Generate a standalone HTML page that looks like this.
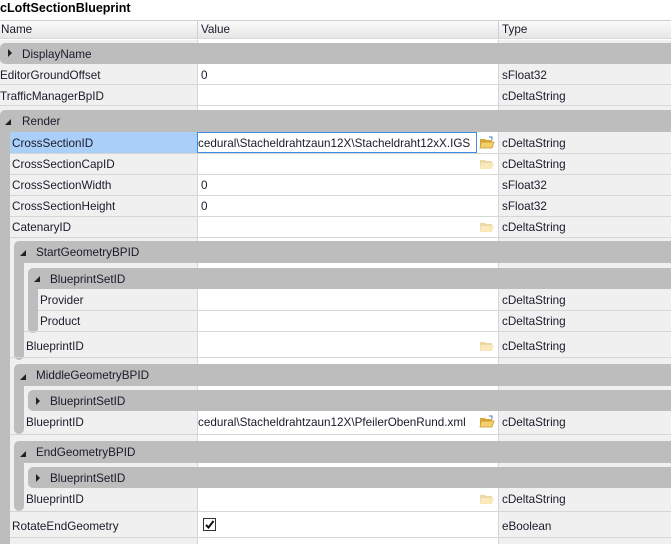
<!DOCTYPE html>
<html><head><meta charset="utf-8"><style>
body{margin:0;width:671px;height:544px;overflow:hidden;position:relative;background:#fff;font-family:"Liberation Sans",sans-serif;font-size:11.7px;color:#1a1a2a}
div{position:absolute;box-sizing:border-box}
.t{white-space:nowrap;line-height:21px;padding-top:1px}
.col{top:40px;height:504px}
.g{background:#bdbdbd;height:21px;right:0;border-top-left-radius:5px;border-bottom-left-radius:5px}
.bar{background:#bdbdbd;border-radius:0 0 5px 5px}
.ln{height:1px;background:#d6d6d6;right:0}
.tri{width:0;height:0}
.ex{border-top:4px solid transparent;border-bottom:4px solid transparent;border-left:4px solid #222}
.co{border-left:6px solid transparent;border-bottom:6px solid #222}
</style></head><body>
<div class="t" style="left:0;top:-3px;font-weight:bold;font-size:12.5px;color:#000">cLoftSectionBlueprint</div>
<div style="left:0;top:20px;width:671px;height:19px;background:linear-gradient(#fbfbfb,#e6e6e6);border-top:1px solid #d0d0d0;border-bottom:1px solid #d8d8d8"></div>
<div style="left:197px;top:20px;width:1px;height:19px;background:#d0d0d0"></div>
<div style="left:498px;top:20px;width:1px;height:19px;background:#d0d0d0"></div>
<div class="t" style="left:1px;top:19px;line-height:20px">Name</div>
<div class="t" style="left:201px;top:19px;line-height:20px">Value</div>
<div class="t" style="left:502px;top:19px;line-height:20px">Type</div>
<div class="col" style="left:0;width:197px;background:#f0f0f0"></div>
<div class="col" style="left:197px;width:1px;background:#d6d6d6"></div>
<div class="col" style="left:498px;width:173px;background:#f0f0f0;border-left:1px solid #d6d6d6"></div>

<div class="g" style="left:0;top:43px"></div>
<div class="tri ex" style="left:8px;top:49px"></div>
<div class="t" style="left:22px;top:43px">DisplayName</div>
<div class="ln" style="left:0;top:84px"></div>
<div class="t" style="left:0;top:64px">EditorGroundOffset</div><div class="t" style="left:201px;top:64px">0</div><div class="t" style="left:502px;top:64px">sFloat32</div>
<div class="ln" style="left:0;top:105px"></div>
<div class="t" style="left:0;top:85px">TrafficManagerBpID</div><div class="t" style="left:502px;top:85px">cDeltaString</div>

<div class="g" style="left:0;top:110px;height:22px;border-bottom-left-radius:0"></div>
<div class="bar" style="left:0;top:131px;width:10px;height:413px;border-radius:0"></div>
<div class="tri co" style="left:5px;top:119px"></div>
<div class="t" style="left:22px;top:110px">Render</div>

<div style="left:10px;top:132px;width:187px;height:21px;background:#aacff8"></div>
<div style="left:197px;top:132px;width:280px;height:21px;border:1px solid #3d8ee8;background:#fff"></div>
<div class="t" style="left:12px;top:132px">CrossSectionID</div>
<div class="t" style="left:198px;top:132px;width:276px;overflow:hidden">cedural\Stacheldrahtzaun12X\Stacheldraht12xX.IGS</div>
<div class="t" style="left:502px;top:132px">cDeltaString</div>
<div class="ln" style="left:10px;top:153px"></div>
<div class="t" style="left:12px;top:153px">CrossSectionCapID</div><div class="t" style="left:502px;top:153px">cDeltaString</div>
<div class="ln" style="left:10px;top:174px"></div>
<div class="t" style="left:12px;top:174px">CrossSectionWidth</div><div class="t" style="left:201px;top:174px">0</div><div class="t" style="left:502px;top:174px">sFloat32</div>
<div class="ln" style="left:10px;top:195px"></div>
<div class="t" style="left:12px;top:195px">CrossSectionHeight</div><div class="t" style="left:201px;top:195px">0</div><div class="t" style="left:502px;top:195px">sFloat32</div>
<div class="ln" style="left:10px;top:216px"></div>
<div class="t" style="left:12px;top:216px">CatenaryID</div><div class="t" style="left:502px;top:216px">cDeltaString</div>
<div class="ln" style="left:10px;top:237px"></div>

<div class="g" style="left:14px;top:241px;height:22px;border-bottom-left-radius:0"></div>
<div class="bar" style="left:14px;top:262px;width:10px;height:98px"></div>
<div class="tri co" style="left:20px;top:250px"></div>
<div class="t" style="left:36px;top:241px">StartGeometryBPID</div>
<div class="g" style="left:28px;top:268px;border-bottom-left-radius:0"></div>
<div class="bar" style="left:28px;top:288px;width:10px;height:45px"></div>
<div class="tri co" style="left:34px;top:276px"></div>
<div class="t" style="left:50px;top:268px">BlueprintSetID</div>
<div class="t" style="left:40px;top:289px">Provider</div><div class="t" style="left:502px;top:289px">cDeltaString</div>
<div class="ln" style="left:38px;top:310px"></div>
<div class="t" style="left:40px;top:310px">Product</div><div class="t" style="left:502px;top:310px">cDeltaString</div>
<div class="ln" style="left:24px;top:331px"></div>
<div class="t" style="left:26px;top:335px">BlueprintID</div><div class="t" style="left:502px;top:335px">cDeltaString</div>
<div class="ln" style="left:10px;top:357px"></div>

<div class="g" style="left:14px;top:364px;height:22px;border-bottom-left-radius:0"></div>
<div class="bar" style="left:14px;top:385px;width:10px;height:49px"></div>
<div class="tri co" style="left:20px;top:374px"></div>
<div class="t" style="left:36px;top:364px">MiddleGeometryBPID</div>
<div class="g" style="left:28px;top:390px"></div>
<div class="tri ex" style="left:36px;top:397px"></div>
<div class="t" style="left:50px;top:390px">BlueprintSetID</div>
<div class="t" style="left:26px;top:411px">BlueprintID</div>
<div class="t" style="left:198px;top:411px">cedural\Stacheldrahtzaun12X\PfeilerObenRund.xml</div>
<div class="t" style="left:502px;top:411px">cDeltaString</div>
<div class="ln" style="left:10px;top:434px"></div>

<div class="g" style="left:14px;top:441px;height:22px;border-bottom-left-radius:0"></div>
<div class="bar" style="left:14px;top:462px;width:10px;height:49px"></div>
<div class="tri co" style="left:20px;top:451px"></div>
<div class="t" style="left:36px;top:441px">EndGeometryBPID</div>
<div class="g" style="left:28px;top:467px"></div>
<div class="tri ex" style="left:36px;top:474px"></div>
<div class="t" style="left:50px;top:467px">BlueprintSetID</div>
<div class="t" style="left:26px;top:488px">BlueprintID</div><div class="t" style="left:502px;top:488px">cDeltaString</div>
<div class="ln" style="left:10px;top:511px"></div>

<div class="t" style="left:12px;top:515px">RotateEndGeometry</div><div class="t" style="left:502px;top:515px">eBoolean</div>
<div style="left:203px;top:518px;width:13px;height:13px;border:1px solid #333;background:#fff"></div>
<svg style="position:absolute;left:203px;top:518px" width="13" height="13"><path d="M3 7 L5.5 9.5 L10.5 3" stroke="#111" stroke-width="2" fill="none"/></svg>
<div class="ln" style="left:10px;top:537px"></div>

<svg style="position:absolute;left:479px;top:136px" width="16" height="13"><path d="M1 3h5l1 1h6v8H1z" fill="#d9a83a"/><path d="M2 6h13l-2 6H1z" fill="#f2cf6a" stroke="#c8952a" stroke-width=".7"/><path d="M10 1l3 0 0 3" stroke="#4a7ac0" fill="none"/></svg>
<svg style="position:absolute;left:479px;top:157px;opacity:.45" width="16" height="13"><path d="M1 3h5l1 1h6v8H1z" fill="#d9a83a"/><path d="M2 6h13l-2 6H1z" fill="#f2cf6a"/></svg>
<svg style="position:absolute;left:479px;top:220px;opacity:.45" width="16" height="13"><path d="M1 3h5l1 1h6v8H1z" fill="#d9a83a"/><path d="M2 6h13l-2 6H1z" fill="#f2cf6a"/></svg>
<svg style="position:absolute;left:479px;top:339px;opacity:.45" width="16" height="13"><path d="M1 3h5l1 1h6v8H1z" fill="#d9a83a"/><path d="M2 6h13l-2 6H1z" fill="#f2cf6a"/></svg>
<svg style="position:absolute;left:479px;top:415px" width="16" height="13"><path d="M1 3h5l1 1h6v8H1z" fill="#d9a83a"/><path d="M2 6h13l-2 6H1z" fill="#f2cf6a" stroke="#c8952a" stroke-width=".7"/><path d="M10 1l3 0 0 3" stroke="#4a7ac0" fill="none"/></svg>
<svg style="position:absolute;left:479px;top:492px;opacity:.45" width="16" height="13"><path d="M1 3h5l1 1h6v8H1z" fill="#d9a83a"/><path d="M2 6h13l-2 6H1z" fill="#f2cf6a"/></svg>
</body></html>
